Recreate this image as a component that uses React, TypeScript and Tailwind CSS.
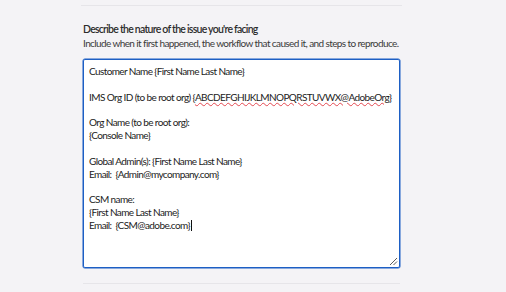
import React from "react";

export default function App() {
  const lines: React.ReactNode[] = [
    "Customer Name {First Name Last Name}",
    "",
    <>
      IMS Org ID (to be root org) {"{"}
      <span className="underline decoration-wavy decoration-[#e34850] decoration-[0.5px] underline-offset-[1px]">
        ABCDEFGHIJKLMNOPQRSTUVWX@AdobeOrg
      </span>
      {"}"}
    </>,
    "",
    "Org Name (to be root org):",
    "{Console Name}",
    "",
    "Global Admin(s): {First Name Last Name}",
    "Email:  {Admin@mycompany.com}",
    "",
    "CSM name:",
    "{First Name Last Name}",
    <>
      Email:  {"{CSM@adobe.com}"}
      <span className="inline-block w-px h-[11px] bg-[#111] align-[-2px] ml-[1px]" />
    </>,
  ];
  return (
    <div
      className="w-[506px] h-[292px] bg-[#f4f3f6] overflow-hidden text-[#2c2c2c]"
      style={{ fontFamily: '"Lato", "Noto Sans", sans-serif' }}
    >
      <div className="pl-[83px] pr-[106px]">
        <div className="h-[5px]" />
        <div className="h-px bg-[#e6e5e9] -ml-[2px] mr-[-2px]" />
        <div className="pt-[16px] text-[10.5px] leading-[14px] font-semibold tracking-[-0.75px]">
          Describe the nature of the issue you're facing
        </div>
        <div className="text-[10px] leading-[14px] text-[#3a3a3a] tracking-[-0.6px] whitespace-nowrap">
          Include when it first happened, the workflow that caused it, and steps to reproduce.
        </div>
        <div className="mt-[9px] relative h-[209px] bg-white rounded-[2px] shadow-[inset_0_0_0_1px_#1d5fc4,0_0_0_0.5px_#1d5fc4] px-[6px] pt-[6px] text-[10px] leading-[12.85px] text-[#222] tracking-[-0.6px]">
          {lines.map((l, i) => (
            <div key={i} className="h-[12.85px] whitespace-pre">
              {l}
            </div>
          ))}
          <svg
            className="absolute right-[2px] bottom-[2px]"
            width="10"
            height="10"
            viewBox="0 0 10 10"
          >
            <line x1="2" y1="9" x2="9" y2="2" stroke="#333" strokeWidth="0.8" />
            <line x1="5.5" y1="9" x2="9" y2="5.5" stroke="#333" strokeWidth="0.8" />
          </svg>
        </div>
        <div className="mt-[15px] h-px bg-[#e6e5e9]" />
      </div>
    </div>
  );
}
